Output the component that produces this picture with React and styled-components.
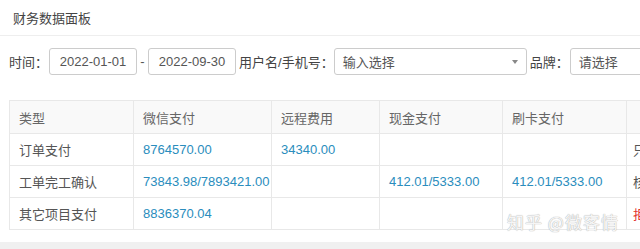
import React from "react";
import styled, { createGlobalStyle } from "styled-components";

const Global = createGlobalStyle`
  html, body { margin: 0; padding: 0; background: #f0f0f0; }
  body { font-family: "Liberation Sans", "Noto Sans CJK SC", sans-serif; font-size: 13px; color: #444; }
`;

const Page = styled.div`
  width: 640px;
  height: 249px;
  overflow: hidden;
  position: relative;
`;

const Panel = styled.div`
  background: #fff;
  height: 242px;
  overflow: hidden;
`;

const Header = styled.div`
  height: 35px;
  border-bottom: 1px solid #eeeeee;
  display: flex;
  align-items: center;
  padding-left: 13px;
  color: #444;
  font-size: 13px;
`;

const Body = styled.div`
  padding: 12px 0 0 9px;
`;

const Filters = styled.div`
  display: flex;
  align-items: center;
  white-space: nowrap;
  height: 27px;
`;

const Label = styled.span`
  flex: none;
  color: #444;
  font-size: 13px;
  margin-left: ${p => p.$ml || 0}px;
  margin-right: ${p => p.$mr || 0}px;
`;

const Input = styled.div`
  box-sizing: border-box;
  height: 27px;
  width: ${p => p.$w}px;
  flex: none;
  border: 1px solid #cccccc;
  border-radius: 3px;
  display: flex;
  align-items: center;
  padding: 0 ${p => p.$pl || 12}px;
  justify-content: ${p => (p.$center ? "center" : "space-between")};
  color: #555;
  font-size: 13px;
`;

const Dash = styled.span`
  flex: none;
  width: 11px;
  text-align: center;
  color: #555;
`;

const Caret = styled.span`
  width: 0;
  height: 0;
  border-left: 3px solid transparent;
  border-right: 3px solid transparent;
  border-top: 4px solid #888;
`;

const Table = styled.table`
  margin-top: 25px;
  border-collapse: collapse;
  table-layout: fixed;
  width: 760px;
`;

const Th = styled.th`
  height: 32px;
  background: #f9f9f9;
  border: 1px solid #e8e8e8;
  text-align: left;
  font-weight: normal;
  color: #666;
  padding: 0 9px;
  font-size: 13px;
`;

const Td = styled.td`
  height: 31px;
  border: 1px solid #e8e8e8;
  padding: 0 ${p => (p.$tight ? 6 : 9)}px;
  color: ${p => (p.$red ? "#e3342f" : p.$blue ? "#2a8dbd" : "#555")};
  font-size: 13px;
  white-space: nowrap;
`;

const Watermark = styled.div`
  position: absolute;
  left: 507px;
  top: 209px;
  font-size: 17px;
  color: rgba(255, 255, 255, 0.9);
  text-shadow: 0 0 1px #b5b5b5, 0 0 1px #b5b5b5;
  letter-spacing: 1px;
  font-family: "Noto Sans CJK SC", sans-serif;
`;

const cols = [124, 138, 108, 123, 124, 143];

const rows = [
  { type: "订单支付", cells: ["8764570.00", "34340.00", "", "", "只"] },
  { type: "工单完工确认", cells: ["73843.98/7893421.00", "", "412.01/5333.00", "412.01/5333.00", "核"] },
  { type: "其它项目支付", cells: ["8836370.04", "", "", "", "拒"], redLast: true },
];

export default function App() {
  return (
    <Page>
      <Global />
      <Panel>
        <Header>财务数据面板</Header>
        <Body>
          <Filters>
            <Label $mr={1}>时间：</Label>
            <Input $w={88} $center>2022-01-01</Input>
            <Dash>-</Dash>
            <Input $w={88} $center>2022-09-30</Input>
            <Label $ml={3}>用户名/手机号：</Label>
            <Input $w={193} $pl={8}>
              <span>输入选择</span>
              <Caret />
            </Input>
            <Label $ml={3} $mr={1}>品牌：</Label>
            <Input $w={120} $pl={8}>
              <span>请选择</span>
            </Input>
          </Filters>
          <Table>
            <colgroup>
              {cols.map((w, i) => (
                <col key={i} style={{ width: w }} />
              ))}
            </colgroup>
            <thead>
              <tr>
                <Th>类型</Th>
                <Th>微信支付</Th>
                <Th>远程费用</Th>
                <Th>现金支付</Th>
                <Th>刷卡支付</Th>
                <Th></Th>
              </tr>
            </thead>
            <tbody>
              {rows.map((r, i) => (
                <tr key={i}>
                  <Td>{r.type}</Td>
                  {r.cells.map((c, j) => (
                    <Td key={j} $tight={j === 4} $blue={j < 4} $red={j === 4 && r.redLast}>
                      {c}
                    </Td>
                  ))}
                </tr>
              ))}
            </tbody>
          </Table>
        </Body>
      </Panel>
      <Watermark>知乎 @微客情</Watermark>
    </Page>
  );
}
